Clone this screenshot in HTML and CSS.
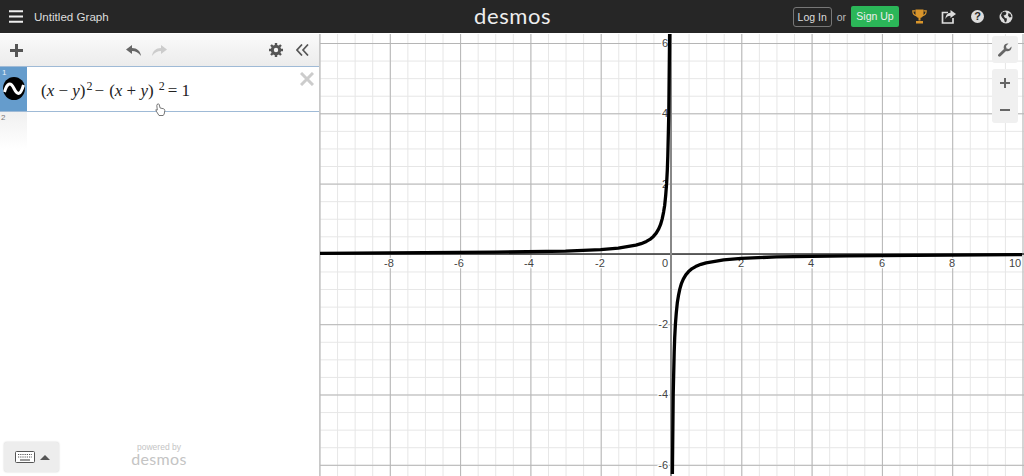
FILE: index.html
```html
<!DOCTYPE html>
<html lang="en">
<head>
    <meta charset="UTF-8">
    <meta name="viewport" content="width=device-width, initial-scale=1.0">
    <title>Untitled Graph - Desmos</title>
    <link rel="stylesheet" href="styles.css">
</head>
<body>
    <div class="topbar">
        <div class="topbar-left">
            <svg class="menu-icon" width="14" height="13" viewBox="0 0 14 13"><path d="M0 1.2h14M0 6.5h14M0 11.8h14" stroke="#eee" stroke-width="2"/></svg>
            <span class="graph-title">Untitled Graph</span>
        </div>
        <div class="logo">desmos</div>
        <div class="topbar-right">
            <span class="login-btn">Log In</span>
            <span class="or">or</span>
            <span class="signup-btn">Sign Up</span>
            <svg class="trophy" width="15" height="15" viewBox="0 0 15 15"><path d="M3.5 0.5h8v4.5c0 2.5-1.8 4-4 4s-4-1.500-4-4z" fill="#d9952b"/><path d="M3.500 1.800H0.800c0 3 1 4.400 3.400 4.900M11.500 1.800h2.700c0 3-1 4.400-3.400 4.900" fill="none" stroke="#d9952b" stroke-width="1.200"/><path d="M6.500 8.500h2v3h-2zM4 12h7v2.500H4z" fill="#d9952b"/></svg>
            <svg class="share" width="15" height="14" viewBox="0 0 15 14"><path d="M7 2.500H1.500v10.500h10.500V8" fill="none" stroke="#ddd" stroke-width="1.700"/><path d="M9.500 0l5.500 4-5.500 4V5.700C7 5.700 5.500 6.800 4.500 9c0-3.500 1.800-6 5-6.200z" fill="#ddd"/></svg>
            <span class="help">?</span>
            <svg class="globe" width="14" height="14" viewBox="0 0 14 14"><circle cx="7" cy="7" r="6.500" fill="#ddd"/><path d="M3 2.500l3-1 1.500 1.500-1 2-2 .5 1.500 2.500 2 .5-.5 3-1.500 1-1-3-2-2-1-2zM9.500 3l2 1 1 3-2 .5-1.500-2z" fill="#2a2a2a"/></svg>
        </div>
    </div>

    <div class="main">
        <div class="sidebar">
            <div class="toolbar">
                <svg width="13" height="13" viewBox="0 0 13 13"><path d="M6.500 0v13M0 6.500h13" stroke="#555" stroke-width="3"/></svg>
                <div class="history">
                    <svg width="15" height="11" viewBox="0 0 15 11"><path d="M6 0L0 4.500 6 9V6c3.500 0 6.500 1.500 9 5C14.500 6 11 3 6 3z" fill="#666"/></svg>
                    <svg width="15" height="11" viewBox="0 0 15 11"><path d="M9 0l6 4.500L9 9V6C5.500 6 2.500 7.500 0 11 .5 6 4 3 9 3z" fill="#ccc"/></svg>
                </div>
                <div class="toolbar-right">
                    <svg width="14" height="14" viewBox="0 0 14 14"><circle cx="7" cy="7" r="3.700" fill="none" stroke="#555" stroke-width="3"/><path d="M7 0v14M0 7h14M2 2l10 10M12 2L2 12" stroke="#555" stroke-width="2.400" stroke-dasharray="2.500 9.200 2.500"/></svg>
                    <svg width="13" height="12" viewBox="0 0 13 12"><path d="M6 .5L1 6l5 5.500M12 .5L7 6l5 5.500" fill="none" stroke="#555" stroke-width="1.700"/></svg>
                </div>
            </div>

            <div class="expr-row">
                <div class="expr-tab">
                    <span class="expr-num">1</span>
                    <svg class="curve-icon" width="22" height="23" viewBox="0 0 22 23"><ellipse cx="11" cy="11.500" rx="11" ry="11.500" fill="#000"/><path d="M1.500 15C4 6 7.500 4.500 11 11.500S17.500 18.500 20.500 8" fill="none" stroke="#fff" stroke-width="3"/></svg>
                </div>
                <div class="math"><span>(<i>x</i> − <i>y</i>)</span><sup>2</sup><span class="minus">−</span><span>(<i>x</i> + <i>y</i>)</span><sup class="gap">2</sup><span class="eq">= 1</span></div>
                <svg class="close" width="14" height="14" viewBox="0 0 14 14"><path d="M1 1l12 12M13 1L1 13" stroke="#ccc" stroke-width="3"/></svg>
                <svg class="hand" width="11" height="13" viewBox="0 0 11 13"><path d="M2.500 1c1-.5 1.500 0 1.800 1l.8 3 3.200.7c1 .3 1.700 1 1.500 2l-.6 3.300-1 1.500H4L1.500 8.500.8 6.800l1.500.2L1.800 2.500z" fill="#fff" stroke="#555" stroke-width=".8"/></svg>
            </div>

            <div class="expr-empty"><span class="expr-num-dim">2</span></div>

            <div class="sidebar-bottom">
                <div class="keyboard-btn">
                    <svg width="20" height="12" viewBox="0 0 20 12"><rect x=".5" y=".5" width="19" height="11" rx="1" fill="#fff" stroke="#555"/><path d="M3 3.500h14M3 6h14" stroke="#555" stroke-width="1.200" stroke-dasharray="1.200 1"/><path d="M5 9h10" stroke="#555" stroke-width="1.200"/></svg>
                    <span class="caret"></span>
                </div>
                <div class="powered">
                    <div class="powered-by">powered by</div>
                    <div class="powered-name">desmos</div>
                </div>
            </div>
        </div>

        <div class="graph">
            <svg class="plot" width="704" height="442" viewBox="320 34 704 442">
                <defs>
                    <pattern id="minor" x="319.500" y="43" width="17.575" height="17.575" patternUnits="userSpaceOnUse">
                        <path d="M0 .5h17.575M.5 0v17.575" stroke="#e6e6e6" stroke-width="1" fill="none"/>
                    </pattern>
                    <pattern id="major" x="319.500" y="43" width="70.300" height="70.300" patternUnits="userSpaceOnUse">
                        <path d="M0 .5h70.300M.5 0v70.300" stroke="#b5b5b5" stroke-width="1" fill="none"/>
                    </pattern>
                </defs>
                <rect x="320" y="34" width="704" height="442" fill="url(#minor)"/>
                <rect x="320" y="34" width="704" height="442" fill="url(#major)"/>
                <path d="M320 254H1024" stroke="#333" stroke-width="1.500"/>
                <path d="M671 34V476" stroke="#888" stroke-width="2"/>

                <g class="tick-x">
                    <text x="389" y="267">-8</text>
                    <text x="459" y="267">-6</text>
                    <text x="529" y="267">-4</text>
                    <text x="600" y="267">-2</text>
                    <text x="665" y="267">0</text>
                    <text x="741" y="267">2</text>
                    <text x="811" y="267">4</text>
                    <text x="882" y="267">6</text>
                    <text x="952" y="267">8</text>
                    <text x="1015" y="267">10</text>
                </g>
                <g class="tick-y">
                    <text x="668" y="47">6</text>
                    <text x="668" y="117">4</text>
                    <text x="668" y="188">2</text>
                    <text x="668" y="328">-2</text>
                    <text x="668" y="398">-4</text>
                    <text x="668" y="469">-6</text>
                </g>

                <!-- y = -1 / 4x, other branch is the same path turned round the origin -->
                <g class="curve">
                    <path id="branch" d="M320 253.400L495 252.200L565.500 251.100L600.700 249.600L618.300 248.100L635.900 245.200L641.100 243.700L646.400 241.400L649.900 239.400L653.400 236.400L656.200 233.100L658.700 228.900L660.500 224.700L662.200 218.900L663.600 212.100L664.700 205.200L665.700 195.400L666.600 183.700L667.300 170.300L667.800 156.300L668.800 113.400L669.600 34"/>
                    <use href="#branch" transform="rotate(180 671 254)"/>
                </g>
            </svg>

            <div class="tool-btn">
                <svg width="14" height="14" viewBox="0 0 14 14"><path d="M13.500 3.500L11 6 8.500 5.500 8 3l2.500-2.500C8 0 5.500 1.500 5.700 4.500c0 .6.100 1 .3 1.500L.5 11.200c-.7.700-.7 1.500 0 2.100s1.400.6 2 0L8 8c3 1 6-1.500 5.500-4.500z" fill="#666"/></svg>
            </div>
            <div class="zoom-btns">
                <div class="zoom-btn"><svg width="10" height="10" viewBox="0 0 10 10"><path d="M5 0v10M0 5h10" stroke="#666" stroke-width="2"/></svg></div>
                <div class="zoom-btn"><svg width="10" height="10" viewBox="0 0 10 10"><path d="M0 5h10" stroke="#666" stroke-width="2"/></svg></div>
            </div>
        </div>
    </div>
</body>
</html>
```

FILE: styles.css
```css
html, body {
    margin: 0;
    height: 100%;
    overflow: hidden;
}

body {
    font-family: 'Liberation Sans', Arial, sans-serif;
    background: #fff;
    display: flex;
    flex-direction: column;
}

svg {
    display: block;
}

.topbar {
    height: 33px;
    flex: none;
    background: #262626;
    display: flex;
    align-items: center;
    justify-content: space-between;
    position: relative;
    color: #ddd;
    font-size: 12px;
}

.topbar-left {
    display: flex;
    align-items: center;
    padding-left: 9px;
}

.graph-title {
    margin-left: 11px;
    font-size: 11.600px;
    color: #ddd;
}

.logo {
    position: absolute;
    left: 474px;
    top: 1px;
    font-family: 'Lato', sans-serif;
    font-size: 22px;
    line-height: 30px;
    color: #eee;
    letter-spacing: 0.6px;
}

.topbar-right {
    display: flex;
    align-items: center;
    padding-right: 11px;
}

.login-btn {
    width: 37px;
    height: 18px;
    line-height: 18px;
    text-align: center;
    border: 1px solid #777;
    border-radius: 3px;
    font-size: 10.500px;
}

.or {
    margin: 0 5px;
    font-size: 10.500px;
    color: #bbb;
}

.signup-btn {
    width: 48px;
    height: 21px;
    line-height: 21px;
    text-align: center;
    background: #2bb658;
    border-radius: 2px;
    color: #eee;
    font-size: 10.500px;
}

.trophy {
    margin-left: 13px;
}

.share {
    margin-left: 14px;
}

.help {
    margin-left: 15px;
    width: 13px;
    height: 13px;
    border-radius: 50%;
    background: #ddd;
    color: #262626;
    font-size: 11px;
    font-weight: bold;
    line-height: 13px;
    text-align: center;
}

.globe {
    margin-left: 15px;
}

.main {
    flex: 1;
    display: flex;
    min-height: 0;
    margin-top: 1px;
}

.sidebar {
    width: 319px;
    flex: none;
    border-right: 1px solid #c8c8c8;
    display: flex;
    flex-direction: column;
    background: #fff;
}

.toolbar {
    height: 32px;
    flex: none;
    background: linear-gradient(#fafafa, #ececec);
    display: flex;
    align-items: center;
    padding: 0 10px;
    position: relative;
}

.history {
    position: absolute;
    left: 126px;
    top: 11px;
    display: flex;
    gap: 11px;
}

.toolbar-right {
    margin-left: auto;
    display: flex;
    align-items: center;
    gap: 13px;
}

.expr-row {
    height: 46px;
    flex: none;
    box-sizing: border-box;
    border-top: 1px solid #9fbad6;
    border-bottom: 1px solid #9fbad6;
    display: flex;
    position: relative;
}

.expr-tab {
    width: 27px;
    flex: none;
    background: #659ccc;
    position: relative;
}

.expr-num {
    position: absolute;
    left: 2px;
    top: 1px;
    font-size: 8px;
    color: #e8f0f8;
}

.curve-icon {
    position: absolute;
    left: 3px;
    top: 10px;
}

.math {
    font-family: 'Liberation Serif', serif;
    font-size: 17px;
    color: #222;
    margin-left: 14px;
    line-height: 44px;
    white-space: nowrap;
    margin-top: 2px;
}

.math sup {
    font-size: 12px;
    line-height: 0;
    vertical-align: 6px;
    margin-left: 1px;
}

.math .minus {
    margin: 0 5px 0 2px;
}

.math .gap {
    margin-left: 5px;
}

.math .eq {
    margin-left: 3px;
}

.close {
    position: absolute;
    right: 5px;
    top: 5px;
}

.hand {
    position: absolute;
    left: 155px;
    top: 36px;
}

.expr-empty {
    width: 27px;
    height: 37px;
    flex: none;
    background: linear-gradient(#f0f0f0, #fff);
    position: relative;
}

.expr-num-dim {
    position: absolute;
    left: 1px;
    top: 1px;
    font-size: 8px;
    color: #777;
}

.sidebar-bottom {
    margin-top: auto;
    display: flex;
    align-items: flex-start;
    height: 34px;
}

.keyboard-btn {
    margin-left: 4px;
    width: 55px;
    height: 30px;
    background: #ededed;
    border-radius: 3px;
    box-shadow: 0 0 2px rgba(0,0,0,0.2);
    display: flex;
    align-items: center;
    padding-left: 11px;
    box-sizing: border-box;
    gap: 5px;
}

.caret {
    width: 0;
    height: 0;
    border-left: 5px solid transparent;
    border-right: 5px solid transparent;
    border-bottom: 5px solid #555;
}

.powered {
    margin-left: 72px;
    width: 56px;
    text-align: center;
    color: #c4c4c4;
}

.powered-by {
    font-size: 8.500px;
    line-height: 9px;
    margin-top: 1px;
}

.powered-name {
    font-family: 'Lato', sans-serif;
    font-size: 16px;
    line-height: 14px;
    letter-spacing: 0.3px;
}

.graph {
    flex: 1;
    position: relative;
    min-width: 0;
}

.plot {
    position: absolute;
    left: 0;
    top: 0;
}

.plot text {
    font-family: 'Liberation Sans', Arial, sans-serif;
    font-size: 11px;
    fill: #444;
    stroke: #fff;
    stroke-width: 2.500px;
    paint-order: stroke;
}

.tick-x text {
    text-anchor: middle;
}

.tick-y text {
    text-anchor: end;
}

.curve path,
.curve use {
    fill: none;
    stroke: #000;
    stroke-width: 3.300px;
    stroke-linejoin: round;
}

.tool-btn {
    position: absolute;
    right: 6px;
    top: 2px;
    width: 26px;
    height: 27px;
    background: #f0f0f0;
    border-radius: 3px;
    display: flex;
    align-items: center;
    justify-content: center;
}

.zoom-btns {
    position: absolute;
    right: 6px;
    top: 35px;
    width: 26px;
    background: #f0f0f0;
    border-radius: 3px;
}

.zoom-btn {
    height: 27px;
    display: flex;
    align-items: center;
    justify-content: center;
}
```
